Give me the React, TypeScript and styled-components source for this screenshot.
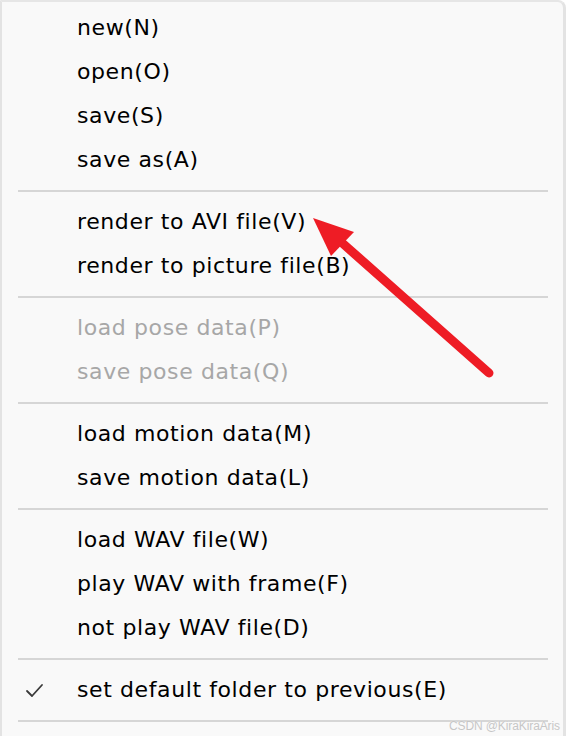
import React from "react";
import styled, { createGlobalStyle } from "styled-components";

const Global = createGlobalStyle`
  html, body { margin: 0; padding: 0; background: #ffffff; }
  #root { width: 566px; height: 736px; }
`;

const Menu = styled.div`
  position: relative;
  box-sizing: border-box;
  width: 566px;
  height: 736px;
  overflow: hidden;
  background: #f9f9f9;
  border-left: 2px solid #e3e3e3;
  border-top: 2px solid #e6e6e6;
  border-right: 3px solid #e3e3e3;
  border-top-right-radius: 8px;
  padding-top: 4px;
  display: flex;
  flex-direction: column;
`;

const Item = styled.div<{ $disabled?: boolean }>`
  display: flex;
  align-items: center;
  height: 44px;
  line-height: 44px;
  font-family: "DejaVu Sans", "Noto Sans", sans-serif;
  font-size: 22px;
  letter-spacing: 0.6px;
  color: ${(p) => (p.$disabled ? "#a7a7a7" : "#000000")};
  white-space: nowrap;
`;

const CheckSlot = styled.span`
  display: flex;
  align-items: center;
  width: 75px;
  height: 100%;
  padding-left: 23px;
  box-sizing: border-box;
  flex-shrink: 0;
`;

const Separator = styled.div`
  height: 2px;
  margin: 8px 15px 8px 16px;
  background: #d6d6d6;
  flex-shrink: 0;
`;

const Watermark = styled.div`
  position: absolute;
  right: 3px;
  bottom: 3px;
  font-family: "Liberation Sans", "Noto Sans", sans-serif;
  font-size: 12px;
  letter-spacing: -0.1px;
  color: #c6c6c6;
  text-shadow: 0 0 1px #ffffff;
`;

const ArrowLayer = styled.svg`
  position: absolute;
  left: -2px;
  top: -2px;
  pointer-events: none;
`;

type Entry = { label: string; disabled?: boolean; checked?: boolean } | "sep";

const entries: Entry[] = [
  { label: "new(N)" },
  { label: "open(O)" },
  { label: "save(S)" },
  { label: "save as(A)" },
  "sep",
  { label: "render to AVI file(V)" },
  { label: "render to picture file(B)" },
  "sep",
  { label: "load pose data(P)", disabled: true },
  { label: "save pose data(Q)", disabled: true },
  "sep",
  { label: "load motion data(M)" },
  { label: "save motion data(L)" },
  "sep",
  { label: "load WAV file(W)" },
  { label: "play WAV with frame(F)" },
  { label: "not play WAV file(D)" },
  "sep",
  { label: "set default folder to previous(E)", checked: true },
  "sep",
];

const Check = () => (
  <svg width="19" height="15" viewBox="0 0 19 15">
    <polyline
      points="2,8 7,13 17,2"
      fill="none"
      stroke="#3a3a3a"
      strokeWidth="1.8"
      strokeLinecap="round"
      strokeLinejoin="round"
    />
  </svg>
);

export default function App() {
  return (
    <>
      <Global />
      <Menu>
        {entries.map((e, i) =>
          e === "sep" ? (
            <Separator key={i} />
          ) : (
            <Item key={i} $disabled={e.disabled}>
              <CheckSlot>{e.checked ? <Check /> : null}</CheckSlot>
              {e.label}
            </Item>
          )
        )}
        <ArrowLayer width="566" height="736" viewBox="0 0 566 736">
          <line
            x1="340"
            y1="241"
            x2="489"
            y2="373"
            stroke="#ee1c25"
            strokeWidth="9"
            strokeLinecap="round"
          />
          <polygon points="313,218 354,232 331,256" fill="#ee1c25" />
        </ArrowLayer>
        <Watermark>CSDN @KiraKiraAris</Watermark>
      </Menu>
    </>
  );
}
